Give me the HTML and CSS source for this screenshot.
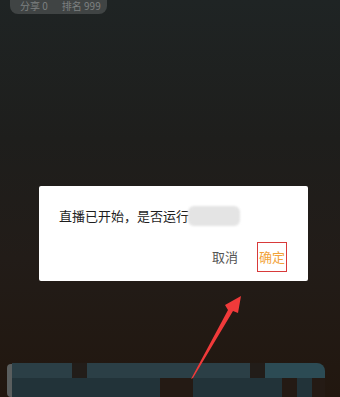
FILE: index.html
```html
<!DOCTYPE html>
<html lang="zh">
<head>
<meta charset="utf-8">
<link rel="stylesheet" href="styles.css">
</head>
<body>
<div class="screen">
  <div class="stats">
    <span>分享 0</span>
    <span>排名 999</span>
  </div>

  <div class="dialog">
    <div class="message">直播已开始，是否运行<span class="masked"></span></div>
    <div class="actions">
      <span class="btn cancel">取消</span>
      <span class="btn confirm">确定</span>
    </div>
  </div>

  <div class="bottom-bar">
    <div class="cell c-teal"></div><div class="cell c-dark"></div><div class="cell c-teal"></div><div class="cell c-teal"></div><div class="cell c-teal"></div><div class="cell c-dark"></div><div class="cell c-light"></div><div class="cell c-light"></div><div class="cell c-light"></div><div class="cell c-light end"></div>
    <div class="cell c-teal2"></div><div class="cell c-teal2"></div><div class="cell c-teal2"></div><div class="cell c-brown"></div><div class="cell c-teal2"></div><div class="cell c-teal2"></div><div class="cell c-teal2"></div><div class="cell c-brown"></div><div class="cell c-teal2"></div><div class="cell c-brown"></div>
  </div>

  <svg class="arrow" width="340" height="397" viewBox="0 0 340 397">
    <polygon points="191,379 228,310 225,305 241,296 238,313 233,311 193,378" fill="#f03a3a"/>
  </svg>
</div>
</body>
</html>
```

FILE: styles.css
```css
* { box-sizing: border-box; }
html, body { margin: 0; padding: 0; }
body {
  width: 340px;
  height: 397px;
  overflow: hidden;
  font-family: "Noto Sans CJK SC", "Noto Sans", sans-serif;
}
.screen {
  position: relative;
  width: 340px;
  height: 397px;
  background: linear-gradient(180deg, #1f2424 0%, #1e1e1c 35%, #221c18 65%, #22170f 100%);
  display: flex;
  flex-direction: column;
}
.stats {
  margin-left: 10px;
  width: 97px;
  height: 14px;
  background: #404444;
  border-radius: 0 0 8px 8px;
  display: flex;
  align-items: flex-start;
  gap: 14px;
  padding-left: 10px;
  font-size: 10px;
  line-height: 12px;
  color: #7d8080;
}
.dialog {
  margin: 172px 0 0 39px;
  width: 269px;
  height: 95px;
  background: #fff;
  border-radius: 2px;
  display: flex;
  flex-direction: column;
}
.message {
  margin-top: 20px;
  padding-left: 20px;
  font-size: 13px;
  line-height: 18px;
  color: #1e1e1e;
  display: flex;
  align-items: center;
}
.masked {
  display: inline-block;
  width: 52px;
  height: 20px;
  background: #e4e4e4;
  border-radius: 6px;
  filter: blur(1px);
  margin-left: -1px;
}
.actions {
  margin-top: 16px;
  display: flex;
  justify-content: flex-end;
  align-items: center;
  gap: 19px;
  padding-right: 21px;
}
.btn {
  font-size: 13px;
  line-height: 18px;
}
.cancel { color: #555; }
.confirm {
  color: #f2a33a;
  border: 1px solid #d83a3a;
  padding: 5px 1px;
}
.bottom-bar {
  margin: auto 0 0 12px;
  width: 313px;
  height: 34px;
  display: grid;
  grid-template-columns: 60px 15px 73px 33px 57px 15px 17px 15px 15px 13px;
  grid-template-rows: 15px 19px;
  position: relative;
  filter: blur(0.6px);
}
.bottom-bar::before {
  content: "";
  position: absolute;
  left: -5px;
  top: 1px;
  width: 5px;
  height: 33px;
  background: #5a5e5e;
  border-radius: 4px 0 0 4px;
}
.c-teal { background: #2b3f46; }
.c-teal2 { background: #223339; }
.c-light { background: #2c4b54; }
.c-dark { background: #221d19; }
.c-brown { background: #241a14; }
.end { border-radius: 0 8px 0 0; }
.arrow {
  position: absolute;
  left: 0;
  top: 0;
  pointer-events: none;
}
```
